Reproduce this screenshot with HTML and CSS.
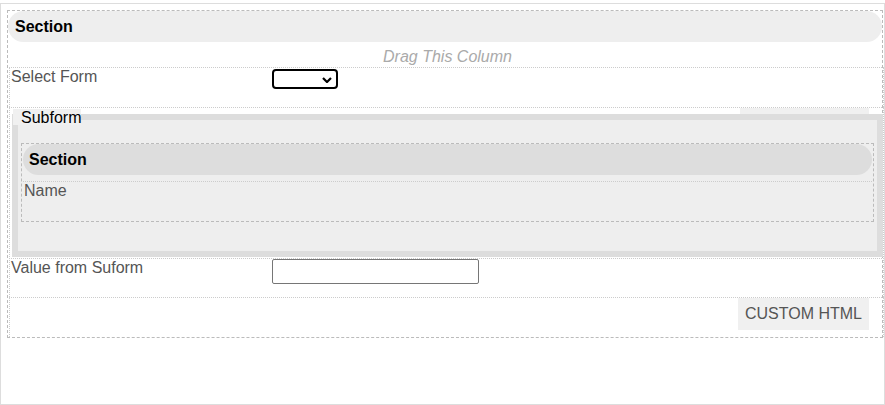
FILE: index.html
```html
<!DOCTYPE html>
<html>
<head>
<meta charset="utf-8">
<link rel="stylesheet" href="styles.css">
</head>
<body>
<div class="frame">
  <div class="section">
    <div class="section-head">Section</div>
    <div class="drag">Drag This Column</div>
    <div class="row">
      <div class="label">Select Form</div>
      <div class="field">
        <span class="select-wrap">
          <select class="select"></select>
          <svg class="chev" width="10" height="6" viewBox="0 0 10 6"><path d="M1 1 L5 5 L9 1" fill="none" stroke="#000" stroke-width="2.2"/></svg>
        </span>
      </div>
    </div>
    <div class="row row-sub">
      <div class="ghost"></div>
      <fieldset class="subform">
        <legend class="legend">Subform</legend>
        <div class="section inner">
          <div class="section-head dark">Section</div>
          <div class="row inner-row">
            <div class="label">Name</div>
          </div>
        </div>
      </fieldset>
    </div>
    <div class="row row-value">
      <div class="label">Value from Suform</div>
      <div class="field">
        <input class="text" type="text">
      </div>
    </div>
    <div class="row row-btn">
      <button class="html-btn">CUSTOM HTML</button>
    </div>
  </div>
</div>
</body>
</html>
```
FILE: styles.css
```css
* { box-sizing: border-box; }
body {
  margin: 0;
  font-family: "Liberation Sans", Arial, sans-serif;
  font-size: 16px;
  background: #fff;
}
.frame {
  margin-top: 3px;
  width: 885px;
  height: 402px;
  border: 1px solid #ddd;
  padding: 6px 1px 0 6px;
}
.section {
  border: 1px dashed #bbb;
}
.section-head {
  height: 31px;
  line-height: 31px;
  background: #eee;
  border-radius: 16px;
  padding-left: 7px;
  font-weight: bold;
  color: #000;
}
.drag {
  height: 25px;
  padding: 6px 0 0 5px;
  line-height: 18px;
  text-align: center;
  font-style: italic;
  font-size: 16px;
  color: #aaa;
}
.row {
  display: flex;
  align-items: flex-start;
  min-height: 40px;
  margin: 0 -2px 0 1px;
  border: 1px dotted #ccc;
  border-bottom: none;
}
.label {
  width: 30%;
  flex: none;
  padding-left: 1px;
  line-height: 18px;
  color: #555;
}
.field {
  flex: 1;
}
.select-wrap {
  position: relative;
  display: inline-block;
  margin-top: 1px;
}
.select {
  display: block;
  appearance: none;
  -webkit-appearance: none;
  width: 66px;
  height: 20px;
  border: 2px solid #000;
  border-radius: 4px;
  background: #fff;
  margin: 0;
}
.chev {
  position: absolute;
  right: 6px;
  top: 8px;
}
.row-sub {
  position: relative;
  display: block;
}
.ghost {
  position: absolute;
  top: 0;
  right: 14px;
  width: 129px;
  height: 7px;
  background: #f0f0f0;
}
.subform {
  position: relative;
  margin: 1px 0 1px 2px;
  border: 6px solid #ddd;
  background: #eee;
  padding: 18px 3px 29px 3px;
  min-width: 0;
}
.legend {
  margin-left: -8px;
  padding: 2px 0 0 8px;
  line-height: 14px;
  background: #f0f0f0;
  color: #000;
}
.inner {
  border-color: #bbb;
}
.section-head.dark {
  background: #ddd;
  margin: 0 1px;
  padding-left: 6px;
}
.inner-row {
  margin: 6px 1px 0 1px;
  border-left: none;
  border-right: none;
}
.row-value {
  min-height: 39px;
}
.text {
  width: 207px;
  height: 25px;
  border: 1px solid #767676;
  border-radius: 2px;
  margin: 0;
  padding: 0 3px;
  font: inherit;
}
.row-btn {
  justify-content: flex-end;
  min-height: 40px;
}
.html-btn {
  height: 32px;
  margin-right: 14px;
  padding: 0 7px;
  border: none;
  background: #f0f0f0;
  color: #555;
  font-family: "Liberation Sans", Arial, sans-serif;
  font-size: 16px;
  line-height: 32px;
}
```
